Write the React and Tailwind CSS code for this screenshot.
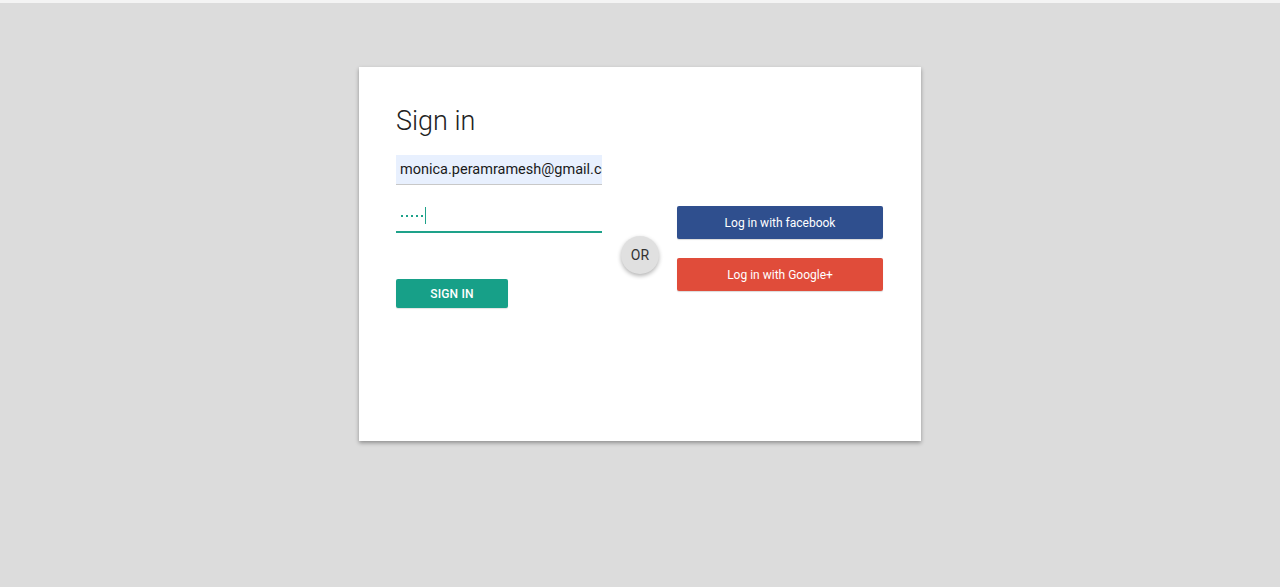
import React from 'react';

const font = { fontFamily: 'Roboto, "Liberation Sans", sans-serif' };

export default function App() {
  return (
    <div className="w-full h-[587px] bg-[#dcdcdc] flex flex-col" style={font}>
      <div className="h-[3px] bg-[#f4f4f4]" />
      <div className="flex justify-center pt-[64px]">
        <div className="w-[562px] h-[374px] bg-white shadow-[0_2px_4px_rgba(0,0,0,0.35)] pl-[37px] pr-[38px] pt-[38px] flex flex-col">
          <h1 className="text-[27px] leading-[32px] font-light text-[#222]">Sign in</h1>
          <div className="flex mt-[18px]">
            {/* left column */}
            <div className="w-[206px] flex flex-col">
              <div className="h-[30px] bg-[#e8f0fe] border-b border-[#c8c8c8] pl-[4px] flex items-center overflow-hidden whitespace-nowrap text-[14.5px] text-[#1a1a1a]">
                monica.peramramesh@gmail.com
              </div>
              <div className="h-[33px] mt-[15px] border-b-2 border-[#1ea28a] flex items-center pl-[5px]">
                <div className="flex gap-[3px] items-center">
                  <span className="w-[2px] h-[2px] bg-[#1ea28a]" />
                  <span className="w-[2px] h-[2px] bg-[#1ea28a]" />
                  <span className="w-[2px] h-[2px] bg-[#1ea28a]" />
                  <span className="w-[2px] h-[2px] bg-[#1ea28a]" />
                  <span className="w-[2px] h-[2px] bg-[#1ea28a]" />
                </div>
                <span className="w-[1px] h-[17px] bg-[#1ea28a] ml-[2px]" />
              </div>
              <button className="mt-[46px] w-[112px] h-[29px] bg-[#17a088] rounded-[2px] text-white text-[12px] font-medium tracking-[0.2px] shadow-[0_1px_1px_rgba(0,0,0,0.12)]">
                SIGN IN
              </button>
            </div>
            {/* OR */}
            <div className="w-[38px] ml-[19px] mt-[81px]">
              <div className="w-[38px] h-[38px] rounded-full bg-[#e0e0e0] shadow-[0_2px_4px_rgba(0,0,0,0.3)] flex items-center justify-center text-[14px] text-[#333]">
                OR
              </div>
            </div>
            {/* right column */}
            <div className="w-[206px] ml-[18px] mt-[51px] flex flex-col gap-[19px]">
              <button className="h-[33px] bg-[#2f4f8e] rounded-[2px] text-white text-[12px] shadow-[0_1px_1px_rgba(0,0,0,0.15)]">
                Log in with facebook
              </button>
              <button className="h-[33px] bg-[#e04c3a] rounded-[2px] text-white text-[12px] shadow-[0_1px_1px_rgba(0,0,0,0.15)]">
                Log in with Google+
              </button>
            </div>
          </div>
        </div>
      </div>
    </div>
  );
}
